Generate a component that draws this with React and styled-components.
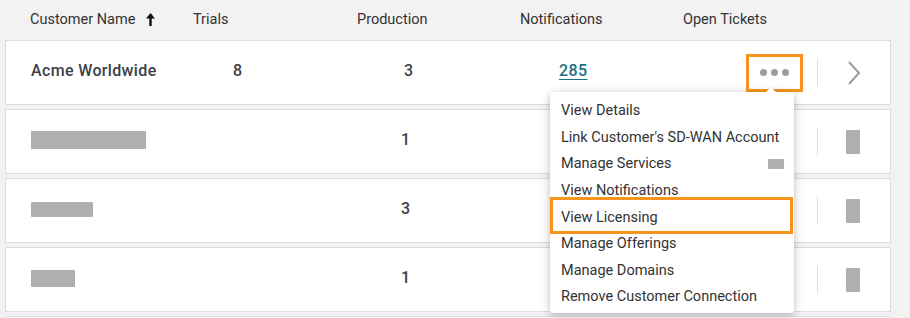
import React from "react";
import styled, { createGlobalStyle } from "styled-components";

const Global = createGlobalStyle`
  html, body { margin: 0; padding: 0; }
  body {
    background: #f2f2f2;
    font-family: Roboto, "Liberation Sans", Arial, sans-serif;
    color: #333;
  }
`;

const Page = styled.div`
  width: 910px;
  height: 318px;
  overflow: hidden;
  padding: 0 19px 0 5px;
  box-sizing: border-box;
`;

const cols = "188px 164px 163px 163px 1fr";

const HeaderRow = styled.div`
  display: grid;
  grid-template-columns: ${cols};
  height: 40px;
  align-items: center;
  font-size: 14.5px;
  color: #333;
`;

const HeadCell = styled.div`
  display: flex;
  align-items: center;
  gap: 10px;
  padding-left: ${(p) => p.$pad || 0}px;
  padding-bottom: 2px;
`;

const Rows = styled.div`
  display: flex;
  flex-direction: column;
  gap: 4px;
`;

const Row = styled.div`
  display: grid;
  grid-template-columns: ${cols};
  align-items: center;
  height: 63px;
  background: #fff;
  border: 1px solid #dcdce2;
  position: relative;
  z-index: ${(p) => (p.$top ? 2 : 1)};
`;

const Name = styled.div`
  padding-left: 25px;
  padding-bottom: 5px;
  font-size: 16px;
  font-weight: 500;
  letter-spacing: 0.35px;
  color: #3c3e48;
`;

const Num = styled.div`
  padding-left: ${(p) => p.$pad}px;
  padding-bottom: 5px;
  font-size: 16px;
  font-weight: 500;
  color: #3c3e48;
`;

const Link = styled.a`
  font-size: 16px;
  font-weight: 500;
  letter-spacing: 0.4px;
  color: #1b6f86;
  text-decoration: underline;
  text-underline-offset: 3px;
`;

const Redacted = styled.div`
  width: ${(p) => p.$w}px;
  height: ${(p) => p.$h}px;
  background: #afafaf;
  border-radius: 1px;
`;

const NameBlock = styled.div`
  padding-left: 25px;
  padding-bottom: 3px;
  display: flex;
  align-items: center;
`;

const Actions = styled.div`
  display: flex;
  align-items: center;
  padding-left: 62px;
  height: 100%;
`;

const MoreWrap = styled.div`
  position: relative;
  width: 57px;
  height: 38px;
`;

const MoreButton = styled.button`
  width: 57px;
  height: 38px;
  box-sizing: border-box;
  border: 3px solid #f7941d;
  background: transparent;
  display: flex;
  align-items: center;
  justify-content: center;
  gap: 4px;
  padding: 0;
  cursor: pointer;
`;

const Dot = styled.span`
  width: 7px;
  height: 7px;
  border-radius: 50%;
  background: #9c9ca6;
`;

const Divider = styled.div`
  width: 1px;
  height: 27px;
  background: #dcdce2;
  margin-left: 14px;
`;

const ChevronCell = styled.div`
  margin-left: 28px;
  display: flex;
  align-items: center;
`;

const Menu = styled.div`
  position: absolute;
  top: 100%;
  right: 9px;
  width: 244px;
  background: #fff;
  box-shadow: 0 2px 8px rgba(0, 0, 0, 0.28);
  border-radius: 2px;
  padding: 6px 0 3px;
  z-index: 10;
  &::before {
    content: "";
    position: absolute;
    top: -5px;
    right: 18px;
    width: 0;
    height: 0;
    border-left: 5px solid transparent;
    border-right: 5px solid transparent;
    border-bottom: 5px solid #fff;
    filter: drop-shadow(0 -1px 0.5px rgba(0,0,0,0.08));
  }
`;

const Item = styled.div`
  position: relative;
  height: 26.6px;
  display: flex;
  align-items: center;
  justify-content: space-between;
  padding: 0 10px 0 11px;
  font-size: 14.5px;
  color: #333;
  white-space: nowrap;
  ${(p) =>
    p.$hl &&
    `&::after {
      content: "";
      position: absolute;
      left: 0;
      right: 1px;
      top: -7px;
      bottom: -4px;
      border: 3px solid #f7941d;
    }`}
`;

const SmallBlock = styled.span`
  width: 16px;
  height: 10px;
  background: #afafaf;
`;

const Chevron = () => (
  <svg width="16" height="26" viewBox="0 0 16 26">
    <polyline points="3,2 13,13 3,24" fill="none" stroke="#9a9aa4" strokeWidth="2" />
  </svg>
);

const SortArrow = () => (
  <svg width="11" height="15" viewBox="0 0 11 15">
    <path d="M5.5 1 L10 6.5 L6.7 6.5 L6.7 14 L4.3 14 L4.3 6.5 L1 6.5 Z" fill="#111" />
  </svg>
);

const items = [
  "View Details",
  "Link Customer's SD-WAN Account",
  "Manage Services",
  "View Notifications",
  "View Licensing",
  "Manage Offerings",
  "Manage Domains",
  "Remove Customer Connection",
];

const others = [
  { w: 115, h: 18, prod: 1 },
  { w: 62, h: 15, prod: 3 },
  { w: 44, h: 17, prod: 1 },
];

export default function App() {
  return (
    <Page>
      <Global />
      <HeaderRow>
        <HeadCell $pad={25}>
          Customer Name <SortArrow />
        </HeadCell>
        <HeadCell>Trials</HeadCell>
        <HeadCell>Production</HeadCell>
        <HeadCell>Notifications</HeadCell>
        <HeadCell>Open Tickets</HeadCell>
      </HeaderRow>
      <Rows>
        <Row $top>
          <Name>Acme Worldwide</Name>
          <Num $pad={39}>8</Num>
          <Num $pad={46}>3</Num>
          <Num $pad={38}>
            <Link>285</Link>
          </Num>
          <Actions>
            <MoreWrap>
              <MoreButton>
                <Dot />
                <Dot />
                <Dot />
              </MoreButton>
              <Menu>
                {items.map((t) => (
                  <Item key={t} $hl={t === "View Licensing"}>
                    {t}
                    {t === "Manage Services" && <SmallBlock />}
                  </Item>
                ))}
              </Menu>
            </MoreWrap>
            <Divider />
            <ChevronCell>
              <Chevron />
            </ChevronCell>
          </Actions>
        </Row>
        {others.map((r, i) => (
          <Row key={i}>
            <NameBlock>
              <Redacted $w={r.w} $h={r.h} />
            </NameBlock>
            <div />
            <Num $pad={43}>{r.prod}</Num>
            <div />
            <Actions>
              <MoreWrap />
              <Divider />
              <ChevronCell>
                <Redacted $w={14} $h={24} />
              </ChevronCell>
            </Actions>
          </Row>
        ))}
        <Row />
      </Rows>
    </Page>
  );
}
